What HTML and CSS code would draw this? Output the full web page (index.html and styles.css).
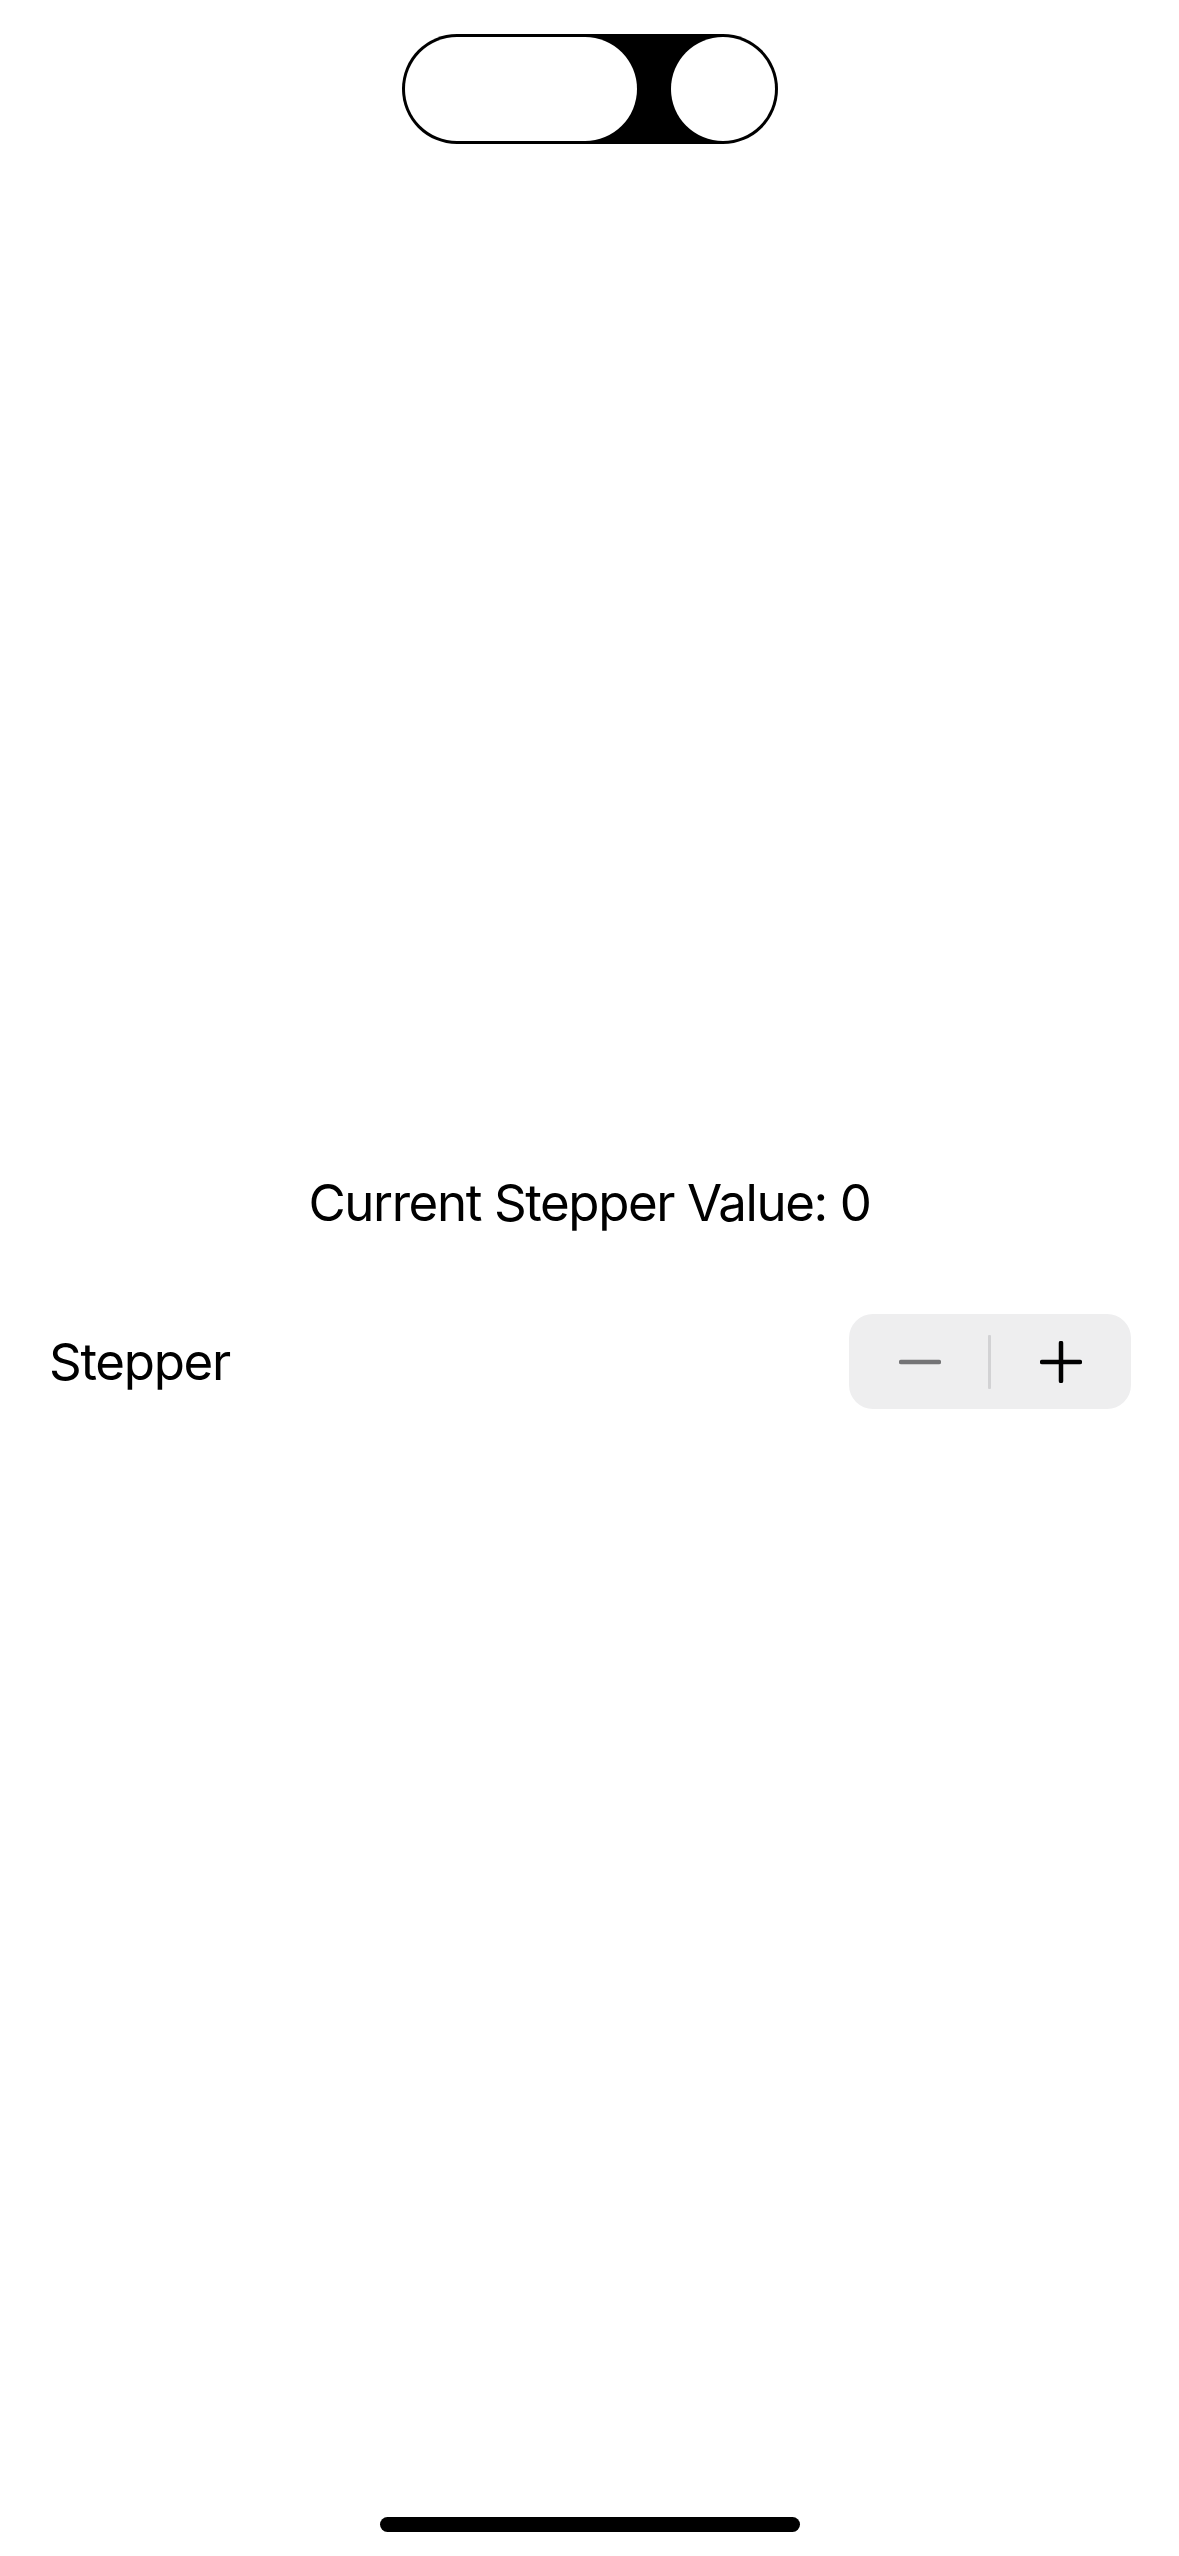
FILE: index.html
```html
<!DOCTYPE html>
<html lang="en">
<head>
<meta charset="utf-8">
<title>Stepper</title>
<link rel="stylesheet" href="styles.css">
</head>
<body>
<div class="screen">
  <div class="island-wrap">
    <div class="island">
      <div class="island-pill"></div>
      <div class="island-dot"></div>
    </div>
  </div>
  <div class="value">Current Stepper Value: 0</div>
  <div class="row">
    <div class="label">Stepper</div>
    <div class="stepper">
      <div class="step-btn">
        <svg width="42" height="42" viewBox="0 0 42 42"><line x1="2" y1="21" x2="40" y2="21" stroke="#747476" stroke-width="4.5" stroke-linecap="round"/></svg>
      </div>
      <div class="step-btn">
        <svg width="42" height="42" viewBox="0 0 42 42"><line x1="2" y1="21" x2="40" y2="21" stroke="#000" stroke-width="4.5" stroke-linecap="round"/><line x1="21" y1="2" x2="21" y2="40" stroke="#000" stroke-width="4.5" stroke-linecap="round"/></svg>
      </div>
      <div class="step-divider"></div>
    </div>
  </div>
  <div class="home-indicator"></div>
</div>
</body>
</html>
```

FILE: styles.css
```css
html, body {
  margin: 0;
  padding: 0;
  background: #ffffff;
}

.screen {
  width: 1179px;
  height: 2556px;
  display: flex;
  flex-direction: column;
  font-family: Inter, "Noto Sans", "Liberation Sans", sans-serif;
  color: #000;
  overflow: hidden;
}

.island-wrap {
  padding-top: 34px;
  display: flex;
  justify-content: center;
}

.island {
  width: 376px;
  height: 110px;
  box-sizing: border-box;
  padding: 3px;
  background: #000;
  border-radius: 55px;
  display: flex;
  align-items: center;
  gap: 34px;
}

.island-pill {
  width: 232px;
  height: 104px;
  border-radius: 52px;
  background: #fff;
}

.island-dot {
  width: 104px;
  height: 104px;
  border-radius: 50%;
  background: #fff;
}

.value {
  margin-top: 1028px;
  font-size: 51px;
  line-height: 62px;
  text-align: center;
  letter-spacing: -1.4px;
}

.row {
  margin-top: 80px;
  padding: 0 48px;
  display: flex;
  align-items: center;
  justify-content: space-between;
}

.label {
  font-size: 51px;
  line-height: 62px;
  letter-spacing: -1.3px;
  padding-left: 1px;
}

.stepper {
  position: relative;
  width: 282px;
  height: 95px;
  border-radius: 24px;
  background: #eeeeef;
  display: grid;
  grid-template-columns: 1fr 1fr;
}

.step-btn {
  display: flex;
  align-items: center;
  justify-content: center;
}

.step-btn svg {
  display: block;
}

.step-divider {
  position: absolute;
  left: 139px;
  top: 21px;
  width: 3px;
  height: 54px;
  border-radius: 1px;
  background: #d2d2d4;
}

.home-indicator {
  margin-top: auto;
  margin-bottom: 24px;
  align-self: center;
  width: 420px;
  height: 15px;
  border-radius: 8px;
  background: #000;
}
```
